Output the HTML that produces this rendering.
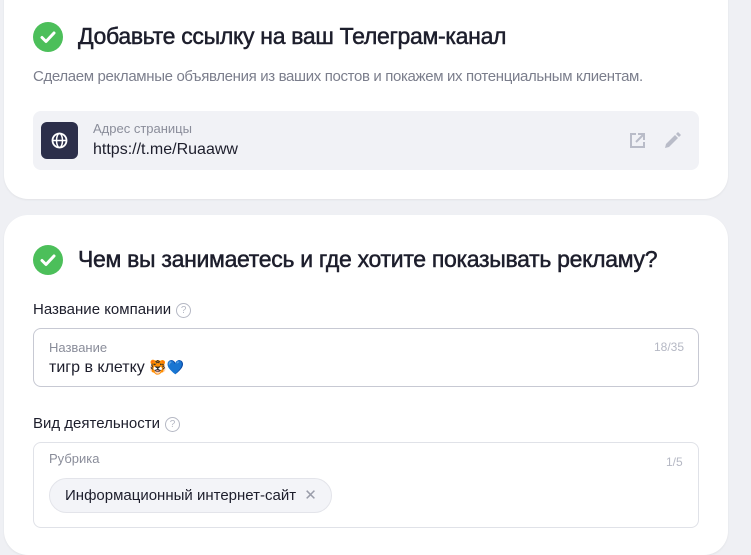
<!DOCTYPE html>
<html><head><meta charset="utf-8"><style>
*{margin:0;padding:0;box-sizing:border-box}
body{width:751px;height:535px;overflow:hidden;background:#eff0f4;font-family:"Liberation Sans","Noto Sans CJK SC",sans-serif;color:#1d1e2c;position:relative}
.card{position:absolute;left:4px;width:724px;background:#fff;border-radius:24px;box-shadow:0 1px 2px rgba(0,0,0,.06)}
.a{position:absolute;white-space:nowrap}
.chk{position:absolute;width:30px;height:30px;border-radius:50%;background:#4cbf5a}
.h{font-size:23px;letter-spacing:-0.3px;color:#1d1e2c;-webkit-text-stroke:0.5px #1d1e2c}
.q{display:inline-block;width:15px;height:15px;border:1.3px solid #b5b8c4;border-radius:50%;font-size:10px;color:#b5b8c4;text-align:center;line-height:13px;vertical-align:1px;margin-left:5px;-webkit-text-stroke:0}
</style></head><body>
<div class="card" style="top:-30px;height:229px"></div>
<div class="chk" style="left:33px;top:22px"><svg width="30" height="30"><path d="M9 15.5l4 4 8-8.5" stroke="#fff" stroke-width="3" fill="none" stroke-linecap="round" stroke-linejoin="round"/></svg></div>
<div class="a h" style="left:78px;top:23px">Добавьте ссылку на ваш Телеграм-канал</div>
<div class="a" style="left:33px;top:68px;font-size:15px;color:#7b7e8c;letter-spacing:-0.35px">Сделаем рекламные объявления из ваших постов и покажем их потенциальным клиентам.</div>
<div class="a" style="left:33px;top:111px;width:666px;height:59px;background:#f1f2f6;border-radius:8px"></div>
<div class="a" style="left:41px;top:122px;width:37px;height:37px;background:#2c2f4a;border-radius:6px"><svg width="37" height="37"><circle cx="18.5" cy="18.5" r="7" stroke="#fff" stroke-width="1.8" fill="none"/><ellipse cx="18.5" cy="18.5" rx="3" ry="7" stroke="#fff" stroke-width="1.5" fill="none"/><path d="M11.5 18.5h14" stroke="#fff" stroke-width="1.5"/></svg></div>
<div class="a" style="left:93px;top:121px;font-size:13px;color:#8a8d9a">Адрес страницы</div>
<div class="a" style="left:93px;top:141px;font-size:16px;color:#1d1e2c">https://t.me/Ruaaww</div>
<svg class="a" style="left:627px;top:131px" width="20" height="20"><path d="M9 3H4v13h13v-5" stroke="#b9bcc8" stroke-width="2" fill="none"/><path d="M11 3h6v6M17 3l-8 8" stroke="#b9bcc8" stroke-width="2" fill="none"/></svg>
<svg class="a" style="left:662px;top:131px" width="20" height="20"><path d="M3 17l1-4 9-9 3 3-9 9z" fill="#b9bcc8"/><path d="M14 3l2-2 3 3-2 2z" fill="#b9bcc8"/></svg>

<div class="card" style="top:215px;height:340px"></div>
<div class="chk" style="left:33px;top:245px"><svg width="30" height="30"><path d="M9 15.5l4 4 8-8.5" stroke="#fff" stroke-width="3" fill="none" stroke-linecap="round" stroke-linejoin="round"/></svg></div>
<div class="a h" style="left:78px;top:246px">Чем вы занимаетесь и где хотите показывать рекламу?</div>
<div class="a" style="left:33px;top:301px;font-size:15px">Название компании<span class="q">?</span></div>
<div class="a" style="left:33px;top:328px;width:666px;height:59px;border:1px solid #c7c9d3;border-radius:8px"></div>
<div class="a" style="left:49px;top:340px;font-size:13px;color:#8a8d9a">Название</div>
<div class="a" style="left:654px;top:340px;font-size:12px;color:#b5b8c4">18/35</div>
<div class="a" style="left:49px;top:359px;font-size:16px">тигр в клетку <span style="font-size:14px">🐯💙</span></div>
<div class="a" style="left:33px;top:415px;font-size:15px">Вид деятельности<span class="q">?</span></div>
<div class="a" style="left:33px;top:442px;width:666px;height:86px;border:1px solid #e0e2e8;border-radius:8px"></div>
<div class="a" style="left:49px;top:451px;font-size:13px;color:#8a8d9a">Рубрика</div>
<div class="a" style="left:666px;top:455px;font-size:12px;color:#b5b8c4">1/5</div>
<div class="a" style="left:49px;top:478px;height:35px;width:283px;background:#f3f4f8;border:1px solid #e3e4ea;border-radius:18px;font-size:15px;line-height:33px;padding-left:15px">Информационный интернет-сайт <span style="color:#9a9daa;margin-left:4px">✕</span></div>
</body></html>
